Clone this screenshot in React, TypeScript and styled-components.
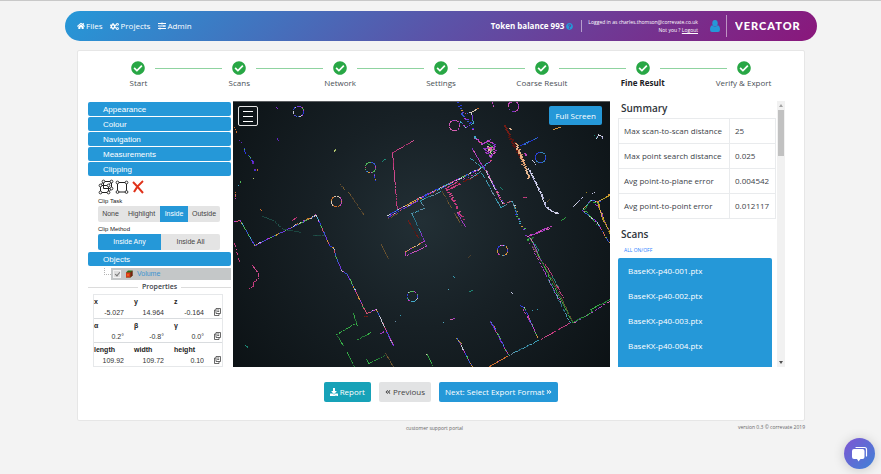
import React, { useState } from 'react';
import styled, { createGlobalStyle } from 'styled-components';
import {
  FaHome,
  FaCogs,
  FaSlidersH,
  FaQuestionCircle,
  FaCheckCircle,
  FaDownload,
  FaAngleDoubleLeft,
  FaAngleDoubleRight,
} from 'react-icons/fa';

const BLUE = '#2598d8';
const GREEN = '#28a745';
const SANS = '"Open Sans", "Noto Sans", sans-serif';
const ARIAL = '"Liberation Sans", Arial, sans-serif';

const GlobalStyle = createGlobalStyle`
  *, *::before, *::after { box-sizing: border-box; }
  body {
    margin: 0;
    background: #f3f3f3;
    color: #3c4248;
    font-family: ${SANS};
    font-size: 8px;
    line-height: 12px;
  }
  button, input { font: inherit; color: inherit; margin: 0; padding: 0; border: 0; background: none; }
  button { cursor: pointer; white-space: nowrap; }
  a { color: inherit; text-decoration: none; }
  h2, p { margin: 0; }
  svg { flex-shrink: 0; }
`;

const Page = styled.div`
  border-top: 1px solid #c8c8c8;
  padding-top: 10px;
`;

/* ---------- header ---------- */

const Header = styled.header`
  display: flex;
  align-items: center;
  height: 30px;
  margin: 0 64px 0 65px;
  padding: 0 14px 0 12px;
  border-radius: 15px;
  color: #fff;
  background: linear-gradient(135deg, ${BLUE} 0%, #5b53a8 50%, #8a177b 100%);
`;

const Nav = styled.nav`
  display: flex;
  gap: 8px;
  flex: 1;
`;

const NavLink = styled.a`
  display: flex;
  align-items: center;
  gap: 1px;
`;

const Balance = styled.div`
  display: flex;
  align-items: center;
  gap: 2px;
  margin-right: 8px;
  font-weight: 700;
  white-space: nowrap;
  svg { color: ${BLUE}; }
`;

const Rule = styled.span<{ $h: number }>`
  width: 1px;
  height: ${(p) => p.$h}px;
  background: rgba(255, 255, 255, 0.5);
`;

const Account = styled.div`
  padding: 0 12px 0 6px;
  font-size: 5px;
  line-height: 8px;
  text-align: right;
  white-space: nowrap;
  a { text-decoration: underline; }
`;

const UserIcon = styled.svg`
  fill: ${BLUE};
  margin-right: 6px;
`;

const Brand = styled.svg`
  display: block;
  margin-left: 8px;
  text {
    font-family: "Lato", sans-serif;
    font-weight: 900;
    fill: #fff;
  }
`;

/* ---------- card and steps ---------- */

const Card = styled.main`
  margin: 9px 76px 0 77px;
  padding: 10px 19px 18px 10px;
  border: 1px solid #e6e6e6;
  border-radius: 2px;
  background: #fff;
`;

const Steps = styled.ol`
  display: grid;
  grid-template-columns: repeat(7, 1fr);
  list-style: none;
  margin: 0 -9px 0 0;
  padding: 0;
`;

const Step = styled.li<{ $current?: boolean }>`
  position: relative;
  display: flex;
  flex-direction: column;
  align-items: center;
  gap: 2px;
  font-weight: ${(p) => (p.$current ? 700 : 400)};
  color: ${(p) => (p.$current ? '#1c2024' : '#4a5056')};
  svg { color: ${GREEN}; }
  &:not(:last-child)::after {
    content: '';
    position: absolute;
    top: 7px;
    left: calc(50% + 17px);
    width: calc(100% - 34px);
    height: 1px;
    background: #8fd3a0;
  }
`;

const Workspace = styled.div`
  display: grid;
  grid-template-columns: 143px minmax(0, 1fr) 167px;
  height: 266px;
  margin-top: 12px;
`;

/* ---------- tool panel ---------- */

const Tools = styled.aside`
  font-family: ${ARIAL};
  padding-top: 1px;
`;

const SectionButton = styled.button`
  display: block;
  width: 100%;
  height: 14px;
  margin-bottom: 1px;
  padding-left: 15px;
  border-radius: 2px;
  background: ${BLUE};
  color: #fff;
  text-align: left;
  line-height: 15px;
`;

const ToolRow = styled.div`
  display: flex;
  align-items: center;
  gap: 1px;
  height: 19px;
  padding-left: 10px;
  button, svg { display: block; }
`;

const FieldLabel = styled.div`
  padding-left: 10px;
  font-size: 6px;
  line-height: 10px;
  color: #222;
`;

const Segments = styled.div<{ $cols: string }>`
  display: grid;
  grid-template-columns: ${(p) => p.$cols};
  height: 16px;
  margin: 0 11px 2px 10px;
  border-radius: 2px;
  overflow: hidden;
  background: #e4e4e4;
`;

const Segment = styled.button<{ $on: boolean }>`
  font-size: 7px;
  background: ${(p) => (p.$on ? BLUE : 'transparent')};
  color: ${(p) => (p.$on ? '#fff' : '#444')};
`;

const ObjectRow = styled.div`
  display: flex;
  height: 12px;
  margin-top: 2px;
`;

const Branch = styled.span`
  width: 7px;
  height: 7px;
  margin-left: 16px;
  border: dotted #b5b5b5;
  border-width: 0 0 1px 1px;
`;

const ObjectItem = styled.label`
  flex: 1;
  display: flex;
  align-items: center;
  gap: 4px;
  padding-left: 2px;
  background: #c4c7c8;
  color: #3b93d0;
  font-size: 7px;
`;

const Check = styled.input`
  appearance: none;
  width: 8px;
  height: 8px;
  background: #dedede;
  border: 1px solid #f2f2f2;
  &:checked::before {
    content: '';
    display: block;
    width: 3px;
    height: 5px;
    margin: 0 0 0 2px;
    border: solid #777;
    border-width: 0 1px 1px 0;
    transform: rotate(40deg);
  }
`;

const Legend = styled.div`
  display: flex;
  align-items: center;
  gap: 4px;
  height: 14px;
  font-family: ${SANS};
  font-size: 7px;
  font-weight: 600;
  &::before, &::after {
    content: '';
    flex: 1;
    height: 1px;
    background: #dcdcdc;
  }
`;

const Props = styled.div`
  margin: 0 8px 0 5px;
  border: 1px solid #e6e8ea;
`;

const PropRow = styled.div`
  display: grid;
  grid-template-columns: 40px 40px 40px 8px;
  align-items: end;
  height: 23px;
  & + & { height: 24px; border-top: 1px solid #d9dcdf; }
  svg { display: block; margin-bottom: 2px; }
`;

const PropField = styled.label`
  display: block;
  font-size: 7px;
  font-weight: 700;
  line-height: 11px;
  color: #222;
  input {
    display: block;
    width: 30px;
    height: 11px;
    font-weight: 400;
    text-align: right;
    color: #333;
  }
`;

/* ---------- viewer ---------- */

const Viewer = styled.section`
  position: relative;
  margin: 0 8px 0 2px;
  overflow: hidden;
  border-top: 1px solid #5a5d60;
  background: radial-gradient(circle at 50% 45%, #222f35 0%, #172025 45%, #0c1215 100%);
`;

const Cloud = styled.svg`
  display: block;
  width: 100%;
  height: 100%;
`;

const MenuButton = styled.button`
  position: absolute;
  top: 4px;
  left: 5px;
  display: flex;
  flex-direction: column;
  justify-content: center;
  align-items: center;
  gap: 4px;
  width: 20px;
  height: 20px;
  border: 1px solid #e4e4e4;
  border-radius: 2px;
  span { width: 10px; height: 1px; background: #fff; }
`;

const FullScreen = styled.button`
  position: absolute;
  top: 4px;
  right: 8px;
  height: 19px;
  padding: 0 6px;
  border-radius: 2px;
  background: ${BLUE};
  color: #fff;
`;

/* ---------- results panel ---------- */

const Results = styled.aside`
  display: flex;
  min-height: 0;
  overflow: hidden;
`;

const ResultsBody = styled.div`
  flex: 1;
  display: flex;
  flex-direction: column;
  align-items: stretch;
  min-width: 0;
`;

const Title = styled.h2`
  padding-left: 3px;
  font-size: 10px;
  font-weight: 600;
  line-height: 14px;
  color: #2f353b;
`;

const Table = styled.table`
  width: 100%;
  margin: 3px 0 8px;
  border-collapse: collapse;
  th, td {
    height: 25px;
    padding: 0 5px;
    border: 1px solid #e9ebed;
    font-weight: 400;
    text-align: left;
    white-space: nowrap;
    font-size: 8px;
  }
`;

const Toggle = styled.button`
  align-self: flex-start;
  padding-left: 6px;
  margin: 4px 0 3px;
  font-size: 5px;
  line-height: 10px;
  color: #2680ff;
`;

const ScanList = styled.ul`
  flex: 1;
  list-style: none;
  margin: 0 4px 0 0;
  padding: 0;
  border-radius: 2px 2px 0 0;
  background: ${BLUE};
  color: #fff;
  li { height: 25px; padding-left: 10px; line-height: 25px; }
`;

const ScrollTrack = styled.div`
  display: flex;
  flex-direction: column;
  align-items: center;
  width: 8px;
  margin-left: 1px;
  padding: 3px 0;
  background: #f1f1f1;
`;

const Thumb = styled.div`
  width: 6px;
  height: 46px;
  margin-top: 3px;
  background: #c1c1c1;
`;

const Arrow = styled.span<{ $down?: boolean }>`
  border: 2px solid transparent;
  border-width: ${(p) => (p.$down ? '3px 2px 0' : '0 2px 3px')};
  border-top-color: ${(p) => (p.$down ? '#505050' : 'transparent')};
  border-bottom-color: ${(p) => (p.$down ? 'transparent' : '#a3a3a3')};
  margin-top: ${(p) => (p.$down ? 'auto' : '0')};
`;

/* ---------- actions, footer, chat ---------- */

const Actions = styled.div`
  display: flex;
  justify-content: center;
  gap: 8px;
  margin: 15px -9px 0 0;
`;

const Action = styled.button<{ $bg: string; $fg?: string }>`
  display: flex;
  align-items: center;
  gap: 2px;
  height: 20px;
  padding: 0 6px;
  border-radius: 2px;
  background: ${(p) => p.$bg};
  color: ${(p) => p.$fg || '#fff'};
`;

const Footer = styled.footer`
  display: grid;
  grid-template-columns: 1fr auto 1fr;
  margin: 0 76px;
  font-size: 5px;
  color: #666;
  a { padding-top: 1px; margin-right: 12px; }
  p { text-align: right; }
`;

const Chat = styled.button`
  position: fixed;
  right: 6px;
  bottom: 5px;
  display: flex;
  align-items: center;
  justify-content: center;
  width: 31px;
  height: 31px;
  border-radius: 50%;
  background: linear-gradient(135deg, #7f55d3, #3f83d6);
  box-shadow: 0 1px 12px rgba(0, 0, 0, 0.18);
`;

/* ---------- point cloud ---------- */

type Trace = [palette: string, width: number, density: number, points: number[]];

const PALETTES: Record<string, string[]> = {
  mix: ['#2f3ff0', '#d040d8', '#48b8d8', '#e8a040', '#58c860', '#d8d8e8', '#7a3cf0', '#e05878', '#3a60e0'],
  pink: ['#d83c86', '#c03478', '#e05098'],
  magenta: ['#d048c8', '#b03cd0', '#e868c0', '#8838d8'],
  green: ['#2fa040', '#3cc04c', '#248038'],
  teal: ['#1c8c78', '#20a088'],
  dim: ['#1c4a44', '#245850'],
  cyan: ['#38a8c0', '#58b8d0', '#2c7890', '#7098b0'],
  brown: ['#6a5230', '#806030', '#54442c'],
  red: ['#7c1c14', '#5c1410'],
  peach: ['#f0b080', '#e09868', '#f8c8a0'],
  blue: ['#2438e0', '#3050f0', '#3890c8'],
  white: ['#d8d8f8', '#b8b8e8', '#f0f0ff'],
  yellow: ['#c8a820', '#a88820', '#e0b848'],
  fire: ['#e07830', '#d048c8', '#e8a040', '#f0d8c0'],
  purple: ['#6a28d0', '#9030e0', '#4830e8'],
  lime: ['#a8c860', '#c8d880'],
};

const TRACES: Trace[] = [
  ['pink', 1, 0.9, [413, 140, 392, 152, 397, 211]],
  ['lime', 1, 0.9, [333, 152, 336, 148]],
  ['teal', 1, 0.9, [381, 161, 386, 158]],
  ['mix', 1, 0.9, [374, 173, 375, 182]],
  ['brown', 1, 0.9, [340, 184, 345, 190]],
  ['brown', 1, 0.9, [347, 190, 364, 215]],
  ['purple', 1, 0.8, [276, 107, 278, 108]],
  ['purple', 1, 0.8, [277, 138, 278, 141]],
  ['fire', 1, 0.5, [234, 127, 237, 134]],
  ['purple', 1, 0.6, [239, 140, 242, 143]],
  ['mix', 1, 0.8, [244, 148, 245, 155]],
  ['mix', 1, 0.5, [247, 153, 253, 163]],
  ['purple', 2, 0.5, [251, 160, 254, 172]],
  ['fire', 1, 0.7, [257, 168, 258, 173]],
  ['lime', 1, 0.5, [252, 177, 253, 179]],
  ['mix', 1, 0.5, [241, 180, 236, 187]],
  ['fire', 1, 0.5, [235, 192, 235, 199]],
  ['fire', 1, 0.7, [260, 209, 262, 210]],
  ['dim', 1, 0.9, [262, 216, 273, 220, 283, 229, 302, 232]],
  ['dim', 1, 0.9, [312, 235, 325, 235]],
  ['pink', 1, 0.9, [291, 220, 297, 217]],
  ['mix', 1, 1, [234, 221, 240, 220, 254, 245, 316, 215, 326, 238, 329, 245, 333, 247, 335, 255, 341, 270, 347, 274, 366, 313, 376, 309, 393, 346]],
  ['purple', 1, 0.6, [255, 245, 275, 235]],
  ['fire', 1, 0.5, [290, 227, 316, 214]],
  ['pink', 1, 0.8, [234, 243, 239, 262]],
  ['pink', 1, 0.9, [252, 265, 258, 273, 258, 278, 253, 282, 253, 286, 248, 288]],
  ['brown', 1, 0.9, [381, 244, 388, 259]],
  ['red', 1, 0.8, [363, 316, 368, 316]],
  ['green', 1, 0.9, [353, 313, 357, 326]],
  ['green', 1, 0.9, [354, 324, 336, 334, 343, 346]],
  ['green', 1, 0.9, [357, 339, 371, 332]],
  ['green', 1, 0.9, [347, 352, 354, 367]],
  ['green', 1, 0.9, [366, 359, 368, 363, 385, 355]],
  ['brown', 1, 0.9, [385, 353, 393, 367]],
  ['magenta', 1, 0.7, [380, 333, 386, 330, 393, 345]],
  ['teal', 1, 0.8, [245, 345, 248, 347]],
  ['cyan', 1, 0.9, [400, 315, 401, 314]],
  ['cyan', 1, 0.9, [395, 321, 396, 320]],
  ['mix', 1, 1, [387, 215, 420, 197, 483, 166, 492, 159]],
  ['purple', 1, 0.7, [387, 217, 420, 199]],
  ['mix', 1, 0.6, [388, 217, 420, 198, 483, 167]],
  ['brown', 1, 0.9, [388, 218, 398, 213]],
  ['cyan', 1, 0.9, [412, 214, 420, 232]],
  ['red', 1, 0.9, [408, 220, 418, 238]],
  ['cyan', 1, 0.8, [411, 213, 424, 208, 420, 200, 441, 191]],
  ['magenta', 1, 0.9, [419, 229, 426, 246, 406, 255]],
  ['fire', 1, 0.9, [424, 241, 405, 251, 405, 256]],
  ['pink', 2, 0.8, [446, 188, 463, 220]],
  ['pink', 1, 0.9, [445, 188, 458, 181]],
  ['pink', 2, 0.6, [448, 189, 460, 183]],
  ['magenta', 1, 0.4, [460, 180, 476, 173]],
  ['red', 2, 0.5, [458, 183, 476, 175]],
  ['magenta', 1, 0.9, [457, 212, 465, 227]],
  ['brown', 1, 0.9, [442, 191, 451, 208]],
  ['brown', 1, 0.9, [454, 213, 462, 227]],
  ['mix', 2, 0.5, [458, 102, 462, 115, 470, 123, 475, 138, 483, 145]],
  ['mix', 1, 0.7, [460, 114, 471, 112, 473, 123, 465, 127, 459, 120]],
  ['fire', 1, 0.7, [471, 112, 479, 107]],
  ['magenta', 1, 0.8, [474, 138, 482, 143, 491, 139]],
  ['magenta', 2, 0.9, [481, 144, 487, 140, 493, 144, 494, 152, 489, 157, 484, 148, 491, 147, 487, 153]],
  ['fire', 2, 0.8, [486, 146, 491, 153, 486, 150]],
  ['green', 1, 0.8, [487, 143, 493, 147, 489, 155]],
  ['magenta', 1, 0.9, [472, 148, 482, 166]],
  ['cyan', 1, 0.7, [470, 158, 488, 172]],
  ['mix', 1, 0.9, [483, 166, 502, 203, 511, 201]],
  ['magenta', 1, 0.5, [484, 166, 503, 203]],
  ['cyan', 1, 0.8, [470, 178, 480, 171, 490, 188, 500, 207, 512, 201, 517, 215]],
  ['mix', 2, 0.35, [513, 203, 517, 218, 526, 233]],
  ['teal', 1, 0.8, [500, 187, 503, 190]],
  ['pink', 1, 0.8, [523, 197, 527, 197]],
  ['magenta', 2, 0.8, [526, 236, 550, 226]],
  ['magenta', 1, 0.8, [530, 235, 550, 228]],
  ['green', 1, 0.8, [560, 220, 566, 217]],
  ['red', 2, 1, [504, 125, 512, 143, 524, 163]],
  ['red', 3, 0.8, [511, 138, 514, 144, 521, 158]],
  ['peach', 3, 0.7, [508, 131, 511, 127]],
  ['peach', 3, 0.9, [516, 143, 519, 152, 523, 165]],
  ['peach', 2, 0.9, [517, 148, 524, 166, 528, 179]],
  ['blue', 1, 1, [520, 145, 538, 137]],
  ['blue', 1, 0.5, [521, 145, 536, 139]],
  ['magenta', 2, 0.7, [524, 153, 526, 156]],
  ['white', 1, 0.8, [531, 159, 536, 165]],
  ['white', 1, 1, [528, 168, 541, 195, 545, 206, 551, 211, 557, 212]],
  ['white', 1, 0.6, [529, 168, 542, 195, 546, 206, 552, 211]],
  ['white', 2, 0.9, [555, 214, 557, 211]],
  ['white', 1, 0.9, [573, 206, 583, 196]],
  ['brown', 1, 0.8, [547, 201, 549, 198]],
  ['yellow', 1, 0.8, [586, 192, 588, 190]],
  ['white', 1, 0.8, [592, 193, 595, 191]],
  ['fire', 2, 0.8, [553, 129, 560, 126]],
  ['white', 1, 0.9, [596, 138, 598, 134, 602, 136, 602, 139]],
  ['teal', 1, 0.8, [594, 135, 597, 139]],
  ['yellow', 1, 0.9, [610, 195, 597, 201, 602, 218, 610, 233]],
  ['yellow', 1, 0.5, [598, 202, 603, 218, 610, 235]],
  ['fire', 2, 0.6, [604, 197, 610, 193]],
  ['mix', 1, 0.9, [600, 201, 590, 200, 582, 210, 597, 222, 607, 240, 610, 243]],
  ['green', 1, 0.6, [598, 203, 590, 201, 584, 209, 598, 226]],
  ['magenta', 1, 0.6, [592, 202, 598, 206, 608, 229]],
  ['green', 2, 0.8, [525, 240, 534, 236]],
  ['magenta', 1, 0.9, [525, 235, 530, 237, 541, 261]],
  ['green', 1, 0.9, [530, 238, 551, 281, 572, 322]],
  ['brown', 1, 0.9, [532, 246, 553, 281, 572, 321]],
  ['magenta', 1, 0.6, [529, 242, 550, 283, 562, 305]],
  ['cyan', 1, 0.8, [548, 279, 561, 305, 570, 323]],
  ['pink', 1, 0.8, [538, 257, 548, 268, 563, 298]],
  ['teal', 1, 0.9, [533, 242, 539, 251]],
  ['teal', 1, 0.9, [551, 275, 559, 288]],
  ['green', 1, 1, [572, 322, 592, 312, 590, 309, 610, 299]],
  ['magenta', 1, 0.6, [574, 322, 592, 312, 610, 300]],
  ['pink', 1, 0.9, [571, 322, 540, 339]],
  ['cyan', 1, 0.9, [538, 340, 508, 355]],
  ['fire', 1, 1, [507, 356, 487, 367]],
  ['mix', 1, 0.9, [520, 305, 524, 307, 538, 339]],
  ['magenta', 1, 0.7, [523, 309, 532, 326]],
  ['purple', 1, 0.9, [490, 321, 507, 353]],
  ['mix', 1, 0.8, [491, 321, 508, 355]],
  ['yellow', 1, 0.9, [456, 338, 462, 344]],
  ['mix', 1, 1, [457, 338, 472, 367]],
  ['green', 1, 0.9, [427, 354, 433, 367]],
  ['fire', 2, 0.8, [426, 354, 428, 353]],
  ['teal', 1, 0.8, [469, 291, 473, 289]],
  ['cyan', 1, 0.8, [453, 276, 455, 277]],
  ['cyan', 1, 1, [448, 289, 449, 289]],
  ['brown', 1, 0.9, [468, 257, 470, 254]],
  ['magenta', 2, 0.9, [450, 319, 454, 317]],
  ['cyan', 1, 1, [443, 322, 444, 323]],
  ['cyan', 1, 1, [532, 310, 533, 310]],
  ['cyan', 1, 1, [537, 309, 538, 310]],
  ['white', 1, 0.9, [511, 292, 513, 293]],
  ['magenta', 1, 0.8, [492, 102, 493, 107]],
  ['magenta', 1, 0.8, [508, 103, 512, 101]],
];

const RINGS: [palette: string, x: number, y: number][] = [
  ['mix', 298, 111],
  ['mix', 370, 167],
  ['fire', 336, 201],
  ['mix', 412, 296],
  ['magenta', 454, 125],
  ['magenta', 513, 106],
  ['blue', 540, 157],
  ['mix', 502, 250],
];

function ringPoints(x: number, y: number) {
  return Array.from({ length: 17 }, (_, i) => [
    x + 5 * Math.cos((i * Math.PI) / 8),
    y + 5 * Math.sin((i * Math.PI) / 8),
  ]).flat();
}

function buildCloud() {
  let seed = 7;
  const random = () => {
    seed = (seed * 16807) % 2147483647;
    return seed / 2147483647;
  };
  const paths: Record<string, string> = {};
  const all: Trace[] = [
    ...TRACES,
    ...RINGS.map(([palette, x, y]): Trace => [palette, 1, 0.9, ringPoints(x, y)]),
  ];
  all.forEach(([name, width, density, pts]) => {
    const colours = PALETTES[name];
    let colour = colours[0];
    for (let i = 0; i + 3 < pts.length; i += 2) {
      const dx = pts[i + 2] - pts[i];
      const dy = pts[i + 3] - pts[i + 1];
      const steps = Math.max(1, Math.round(Math.hypot(dx, dy)));
      for (let s = 0; s < steps; s++) {
        if (random() < 0.45) colour = colours[Math.floor(random() * colours.length)];
        if (random() > density) continue;
        const jitter = width > 1 ? (random() - 0.5) * width : 0;
        const x = Math.round(pts[i] + (dx * s) / steps + jitter);
        const y = Math.round(pts[i + 1] + (dy * s) / steps);
        const w = width > 1 ? 2 : 1;
        paths[colour] = (paths[colour] || '') + `M${x} ${y}h${w}v1h-${w}z`;
      }
    }
  });
  return Object.entries(paths);
}

const CLOUD = buildCloud();

function PointCloud() {
  return (
    <Cloud viewBox="233 102 377 265" preserveAspectRatio="xMidYMid slice" role="img" aria-label="Point cloud">
      {CLOUD.map(([colour, d]) => (
        <path key={colour} d={d} fill={colour} opacity="0.9" />
      ))}
    </Cloud>
  );
}

/* ---------- small drawings ---------- */

const CubeIcon = () => (
  <svg width="16" height="16" viewBox="0 0 16 16" fill="none" stroke="#222">
    <path d="M2.5 6.5h8v7h-8zM5.500 2.500h8v7h-8zM2.500 6.500l3-4M10.500 6.500l3-4M10.500 13.500l3-4" />
    {[[2.5, 6.5], [10.5, 6.5], [2.500, 13.5], [10.5, 13.5], [5.5, 2.5], [13.5, 2.5], [13.5, 9.5]].map(([x, y]) => (
      <circle key={`${x}-${y}`} cx={x} cy={y} r="1.4" fill="#fff" strokeWidth="0.9" />
    ))}
  </svg>
);

const SquareIcon = () => (
  <svg width="14" height="16" viewBox="0 0 14 16" fill="none" stroke="#222">
    <path d="M2.500 3.500h9v9.500h-9z" />
    {[[2.5, 3.5], [11.5, 3.5], [2.5, 13], [11.5, 13]].map(([x, y]) => (
      <circle key={`${x}-${y}`} cx={x} cy={y} r="1.4" fill="#fff" strokeWidth="0.9" />
    ))}
  </svg>
);

const CrossIcon = () => (
  <svg width="16" height="16" viewBox="0 0 16 16" fill="none" stroke="#e0321a" strokeWidth="2">
    <path d="M3 3q4 4 10 11M13 2q-6 5-9 11" />
  </svg>
);

const VolumeIcon = () => (
  <svg width="8" height="8" viewBox="0 0 8 8">
    <path d="M1 2.500L3 .5h4.500v5l-2 2H1z" fill="#2c6e1c" />
    <path d="M1 2.500h4.500v5H1z" fill="#d83818" />
    <path d="M5.500 2.500l2-2v5l-2 2z" fill="#7c1c10" />
    <path d="M2 4h2v2H2z" fill="#e86018" />
  </svg>
);

const CopyIcon = () => (
  <svg width="7" height="8" viewBox="0 0 7 8" fill="none" stroke="#444" strokeWidth="0.8">
    <path d="M2 .5h4.500v5H2zM2 2H.5v5.500H5V5.500M3.200 2h2M3.200 3.500h2" />
  </svg>
);

const ChatIcon = () => (
  <svg width="17" height="16" viewBox="0 0 17 16">
    <path d="M5 1.500h8.500q2 0 2 2v6.500" fill="none" stroke="#fff" strokeWidth="1.200" strokeLinecap="round" />
    <path d="M3 3h8.500q2 0 2 2v6q0 2-2 2H9.500L7.500 15.500 6 13H3q-2 0-2-2V5q0-2 2-2z" fill="#fff" />
  </svg>
);

/* ---------- data ---------- */

const STEPS = ['Start', 'Scans', 'Network', 'Settings', 'Coarse Result', 'Fine Result', 'Verify & Export'];
const SECTIONS = ['Appearance', 'Colour', 'Navigation', 'Measurements', 'Clipping'];
const PROPERTIES = [
  [['x', '-5.027'], ['y', '14.964'], ['z', '-0.164']],
  [['α', '0.2°'], ['β', '-0.8°'], ['γ', '0.0°']],
  [['length', '109.92'], ['width', '109.72'], ['height', '0.10']],
];
const SUMMARY = [
  ['Max scan-to-scan distance', '25'],
  ['Max point search distance', '0.025'],
  ['Avg point-to-plane error', '0.004542'],
  ['Avg point-to-point error', '0.012117'],
];
const SCANS = ['001', '002', '003', '004'].map((n) => `BaseKX-p40-${n}.ptx`);

function ToolPanel() {
  const [task, setTask] = useState('Inside');
  const [method, setMethod] = useState('Inside Any');
  return (
    <Tools>
      {SECTIONS.map((name) => (
        <SectionButton key={name}>{name}</SectionButton>
      ))}
      <ToolRow>
        <button aria-label="Clip volume"><CubeIcon /></button>
        <button aria-label="Clip polygon"><SquareIcon /></button>
        <button aria-label="Remove clips"><CrossIcon /></button>
      </ToolRow>
      <FieldLabel>Clip Task</FieldLabel>
      <Segments $cols="25fr 37fr 28fr 32fr">
        {['None', 'Highlight', 'Inside', 'Outside'].map((t) => (
          <Segment key={t} $on={t === task} onClick={() => setTask(t)}>{t}</Segment>
        ))}
      </Segments>
      <FieldLabel>Clip Method</FieldLabel>
      <Segments $cols="63fr 59fr">
        {['Inside Any', 'Inside All'].map((m) => (
          <Segment key={m} $on={m === method} onClick={() => setMethod(m)}>{m}</Segment>
        ))}
      </Segments>
      <SectionButton>Objects</SectionButton>
      <ObjectRow>
        <Branch />
        <ObjectItem>
          <Check type="checkbox" defaultChecked />
          <VolumeIcon />
          Volume
        </ObjectItem>
      </ObjectRow>
      <Legend>Properties</Legend>
      <Props>
        {PROPERTIES.map((row) => (
          <PropRow key={row[0][0]}>
            {row.map(([label, value]) => (
              <PropField key={label}>
                {label}
                <input defaultValue={value} />
              </PropField>
            ))}
            <button aria-label="Copy values"><CopyIcon /></button>
          </PropRow>
        ))}
      </Props>
    </Tools>
  );
}

function ResultsPanel() {
  return (
    <Results>
      <ResultsBody>
        <Title>Summary</Title>
        <Table>
          <tbody>
            {SUMMARY.map(([name, value]) => (
              <tr key={name}>
                <th scope="row">{name}</th>
                <td>{value}</td>
              </tr>
            ))}
          </tbody>
        </Table>
        <Title>Scans</Title>
        <Toggle>ALL ON/OFF</Toggle>
        <ScanList>
          {SCANS.map((scan) => (
            <li key={scan}>{scan}</li>
          ))}
        </ScanList>
      </ResultsBody>
      <ScrollTrack aria-hidden="true">
        <Arrow />
        <Thumb />
        <Arrow $down />
      </ScrollTrack>
    </Results>
  );
}

export default function App() {
  return (
    <Page>
      <GlobalStyle />
      <Header>
        <Nav>
          <NavLink href="#files"><FaHome size={8} />Files</NavLink>
          <NavLink href="#projects"><FaCogs size={9} />Projects</NavLink>
          <NavLink href="#admin"><FaSlidersH size={8} />Admin</NavLink>
        </Nav>
        <Balance>
          Token balance 993
          <FaQuestionCircle size={7} />
        </Balance>
        <Rule $h={12} />
        <Account>
          <div>Logged in as charles.thomson@correvate.co.uk</div>
          <div>Not you ? <a href="#logout">Logout</a></div>
        </Account>
        <UserIcon width="10" height="12" viewBox="0 0 10 12" aria-hidden="true">
          <ellipse cx="5" cy="3.2" rx="2.7" ry="3.2" />
          <path d="M2.200 5.300Q5 8 7.800 5.300Q10 6 10 9.500Q10 12 8 12H2Q0 12 0 9.500Q0 6 2.200 5.300z" />
        </UserIcon>
        <Rule $h={22} />
        <Brand width="68" height="14" viewBox="0 0 68 14" aria-label="Vercator">
          <text x="0" y="11" fontSize="11" letterSpacing="1">VERCATOR</text>
        </Brand>
      </Header>

      <Card>
        <Steps>
          {STEPS.map((step) => (
            <Step key={step} $current={step === 'Fine Result'}>
              <FaCheckCircle size={14} />
              {step}
            </Step>
          ))}
        </Steps>
        <Workspace>
          <ToolPanel />
          <Viewer>
            <PointCloud />
            <MenuButton aria-label="Menu"><span /><span /><span /></MenuButton>
            <FullScreen>Full Screen</FullScreen>
          </Viewer>
          <ResultsPanel />
        </Workspace>
        <Actions>
          <Action $bg="#17a2b8"><FaDownload size={8} />Report</Action>
          <Action $bg="#e2e3e4" $fg="#444"><FaAngleDoubleLeft size={6} />Previous</Action>
          <Action $bg={BLUE}>Next: Select Export Format<FaAngleDoubleRight size={6} /></Action>
        </Actions>
      </Card>

      <Footer>
        <span />
        <a href="#support">customer support portal</a>
        <p>version 0.3 © correvate 2019</p>
      </Footer>
      <Chat aria-label="Open chat"><ChatIcon /></Chat>
    </Page>
  );
}
